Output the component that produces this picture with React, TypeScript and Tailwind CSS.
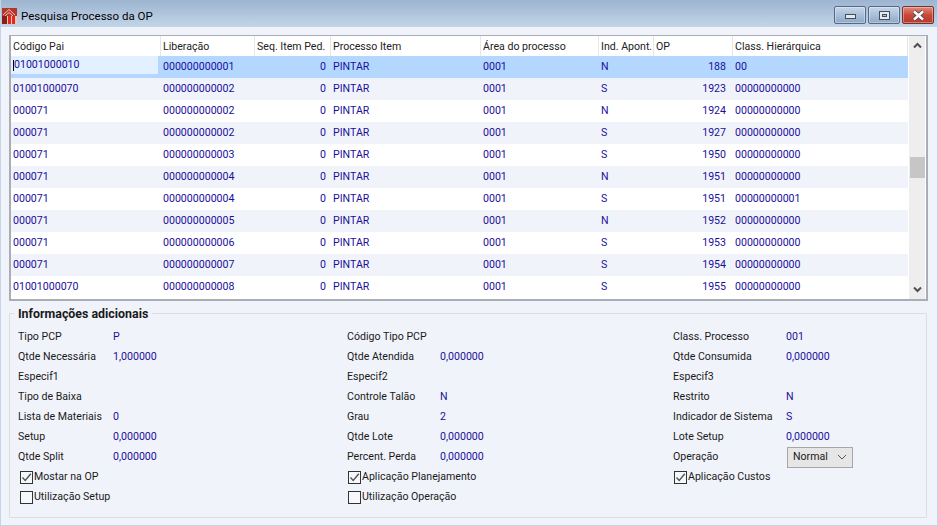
import React from "react";

const cols = [
  { w: 150, label: "Código Pai", align: "left", pr: 0 },
  { w: 94, label: "Liberação", align: "left", pr: 0 },
  { w: 76, label: "Seq. Item Ped.", align: "right", pr: 5 },
  { w: 150, label: "Processo Item", align: "left", pr: 0 },
  { w: 118, label: "Área do processo", align: "left", pr: 0 },
  { w: 55, label: "Ind. Apont.", align: "left", pr: 0 },
  { w: 79, label: "OP", align: "right", pr: 7 },
  { w: 175, label: "Class. Hierárquica", align: "left", pr: 0 },
];

const rows = [
  ["01001000010", "000000000001", "0", "PINTAR", "0001", "N", "188", "00"],
  ["01001000070", "000000000002", "0", "PINTAR", "0001", "S", "1923", "00000000000"],
  ["000071", "000000000002", "0", "PINTAR", "0001", "N", "1924", "00000000000"],
  ["000071", "000000000002", "0", "PINTAR", "0001", "S", "1927", "00000000000"],
  ["000071", "000000000003", "0", "PINTAR", "0001", "S", "1950", "00000000000"],
  ["000071", "000000000004", "0", "PINTAR", "0001", "N", "1951", "00000000000"],
  ["000071", "000000000004", "0", "PINTAR", "0001", "S", "1951", "00000000001"],
  ["000071", "000000000005", "0", "PINTAR", "0001", "N", "1952", "00000000000"],
  ["000071", "000000000006", "0", "PINTAR", "0001", "S", "1953", "00000000000"],
  ["000071", "000000000007", "0", "PINTAR", "0001", "S", "1954", "00000000000"],
  ["01001000070", "000000000008", "0", "PINTAR", "0001", "S", "1955", "00000000000"],
];

const form: [string, string][][] = [
  [["Tipo PCP", "P"], ["Qtde Necessária", "1,000000"], ["Especif1", ""], ["Tipo de Baixa", ""], ["Lista de Materiais", "0"], ["Setup", "0,000000"], ["Qtde Split", "0,000000"]],
  [["Código Tipo PCP", ""], ["Qtde Atendida", "0,000000"], ["Especif2", ""], ["Controle Talão", "N"], ["Grau", "2"], ["Qtde Lote", "0,000000"], ["Percent. Perda", "0,000000"]],
  [["Class. Processo", "001"], ["Qtde Consumida", "0,000000"], ["Especif3", ""], ["Restrito", "N"], ["Indicador de Sistema", "S"], ["Lote Setup", "0,000000"]],
];

function Check({ on, label, ml = 2 }: { on?: boolean; label: string; ml?: number }) {
  return (
    <div className="flex h-5 items-center">
      <div style={{ marginLeft: ml }} className="mr-[1px] flex h-[13px] w-[13px] items-center justify-center border border-[#333333] bg-[#f7f8fc]">
        {on && (
          <svg width="11" height="11" viewBox="0 0 11 11" fill="none">
            <path d="M1.5 5.5 L4.2 8.5 L9.8 1.8" stroke="#555555" strokeWidth="1.4" />
          </svg>
        )}
      </div>
      <span>{label}</span>
    </div>
  );
}

function Field({ label, value, lw }: { label: string; value: string; lw: number }) {
  return (
    <div className="flex h-5 items-center">
      <span className="shrink-0" style={{ width: lw }}>{label}</span>
      <span className="text-[#1a0f9c]">{value}</span>
    </div>
  );
}

function WinBtn({ w, red, children }: { w: number; red?: boolean; children: React.ReactNode }) {
  return (
    <div
      style={{ width: w }}
      className={
        "flex h-[18px] items-center justify-center rounded-[2px] border shadow-[inset_0_0_0_1px_rgba(255,255,255,0.35)] " +
        (red
          ? "border-[#7a2f2a] bg-gradient-to-b from-[#e08a7c] via-[#c9483a] to-[#b8392e]"
          : "border-[#54698a] bg-gradient-to-b from-[#c6d6e8] via-[#a9c0d8] to-[#8ea9c6]")
      }
    >
      {children}
    </div>
  );
}

export default function App() {
  return (
    <div className="flex h-[526px] w-[938px] flex-col overflow-hidden border-x border-b border-[#c3d4e6] bg-[#f1f3fa] font-['Roboto','Noto_Sans',sans-serif] text-[10.6px] leading-none text-[#1a1a1a]">
      <div className="flex h-[27px] shrink-0 items-center bg-gradient-to-b from-[#9db5d0] to-[#c3d5e8] pl-[1px] pr-[3px]">
        <svg width="15" height="16" viewBox="0 0 15 16" className="mr-[4px] mt-[4px]">
          <rect x="0" y="0" width="15" height="16" fill="#b5352b" />
          <path d="M1 7 L7 1.5 L13 7" fill="none" stroke="#f3c3bc" strokeWidth="1" />
          <path d="M3 8 L7 4.5 L11 8" fill="none" stroke="#f3c3bc" strokeWidth="1" />
          <rect x="0" y="8" width="5" height="8" fill="#8a1f18" />
          <rect x="6" y="8" width="3" height="8" fill="#e02a1c" />
          <rect x="10" y="8" width="3" height="8" fill="#e02a1c" />
          <rect x="5" y="8" width="1" height="8" fill="#f3c3bc" />
          <rect x="9" y="8" width="1" height="8" fill="#f3c3bc" />
          <rect x="13" y="8" width="2" height="8" fill="#f3c3bc" />
        </svg>
        <span className="mt-[6px] text-[11.5px] text-black">Pesquisa Processo da OP</span>
        <div className="ml-auto mt-[3px] flex gap-[2px]">
          <WinBtn w={32}>
            <div className="mt-[3px] h-[5px] w-[11px] border border-[#444c58] bg-[#e3e9f1]" />
          </WinBtn>
          <WinBtn w={32}>
            <div className="flex h-[9px] w-[11px] items-center justify-center border border-[#444c58] bg-[#e3e9f1]">
              <div className="h-[3px] w-[5px] border border-[#444c58] bg-[#a9c0d8]" />
            </div>
          </WinBtn>
          <WinBtn w={32} red>
            <svg width="13" height="11" viewBox="0 0 13 11">
              <path d="M2 1.5 L11 9.5 M11 1.5 L2 9.5" stroke="#454a52" strokeWidth="4" />
              <path d="M2 1.5 L11 9.5 M11 1.5 L2 9.5" stroke="#ffffff" strokeWidth="2.4" />
            </svg>
          </WinBtn>
        </div>
      </div>

      <div className="mx-[8px] mt-[8px] flex h-[266px] w-[919px] shrink-0 border-y border-x-2 border-b-2 border-[#a9adb5] bg-white">
        <div className="flex w-[897px] shrink-0 flex-col">
          <div className="flex h-[20px] shrink-0 items-center">
            {cols.map((c) => (
              <div key={c.label} style={{ width: c.w }} className="flex h-full shrink-0 items-center whitespace-nowrap border-r-[1px] border-[#e6e6e6] pl-[2px] pt-[2px] text-[#222222]">
                {c.label}
              </div>
            ))}
          </div>
          {rows.map((r, i) => (
            <div key={i} className={"relative flex h-[22px] shrink-0 items-center text-[#1a0f9c] " + (i === 0 ? "bg-[#b3d7ff]" : i % 2 === 1 ? "bg-[#f1f3fa]" : "bg-white")}>
              {r.map((v, j) => (
                <div key={j} style={{ width: cols[j].w, paddingRight: cols[j].pr }} className={"shrink-0 whitespace-nowrap pl-[2px] " + (cols[j].align === "right" ? "text-right" : "")}>
                  {i === 0 && j === 0 ? "" : v}
                </div>
              ))}
              {i === 0 && (
                <div className="absolute left-0 top-0 flex h-[18px] w-[147px] items-start bg-[#e3f0ff] pl-[2px] pt-[4px]">
                  <span className="-mr-[1px] border-l border-black">{v0}</span>
                </div>
              )}
            </div>
          ))}
        </div>
        <div className="ml-[1px] flex w-[16px] shrink-0 flex-col items-center bg-[#eeeeee]">
          <svg width="9" height="7" viewBox="0 0 9 7" className="mt-[6px]">
            <path d="M1 5.5 L4.5 2 L8 5.5" fill="none" stroke="#505050" strokeWidth="2" />
          </svg>
          <div className="mt-[108px] h-[21px] w-[15px] bg-[#c6c6c6]" />
          <svg width="9" height="7" viewBox="0 0 9 7" className="mt-auto mb-[6px]">
            <path d="M1 1.5 L4.5 5 L8 1.5" fill="none" stroke="#505050" strokeWidth="2" />
          </svg>
        </div>
      </div>

      <div className="relative mx-[8px] mt-[12px] flex h-[205px] w-[918px] shrink-0 rounded-[1px] border border-[#dcdee3] pl-[8px] pt-[13px]">
        <span className="absolute left-[4px] top-[-6px] bg-[#f1f3fa] px-[4px] text-[12.4px] font-bold text-[#1a1a1a]">Informações adicionais</span>
        <div className="flex w-[329px] shrink-0 flex-col">
          {form[0].map(([l, v]) => <Field key={l} label={l} value={v} lw={95} />)}
          <Check on label="Mostar na OP" />
          <Check label="Utilização Setup" />
        </div>
        <div className="flex w-[326px] shrink-0 flex-col">
          {form[1].map(([l, v]) => <Field key={l} label={l} value={v} lw={93} />)}
          <Check on ml={1} label="Aplicação Planejamento" />
          <Check ml={1} label="Utilização Operação" />
        </div>
        <div className="flex flex-col">
          {form[2].map(([l, v]) => <Field key={l} label={l} value={v} lw={113} />)}
          <div className="flex h-5 items-center">
            <span className="w-[114px] shrink-0">Operação</span>
            <div className="flex h-[21px] w-[66px] items-center justify-between border border-[#a6a6a6] bg-[#e6e6e6] pl-[5px] pr-[5px]">
              <span>Normal</span>
              <svg width="10" height="6" viewBox="0 0 10 6"><path d="M1 1 L5 5 L9 1" fill="none" stroke="#555555" strokeWidth="1" /></svg>
            </div>
          </div>
          <Check on ml={1} label="Aplicação Custos" />
        </div>
      </div>
    </div>
  );
}

const v0 = "01001000010";
